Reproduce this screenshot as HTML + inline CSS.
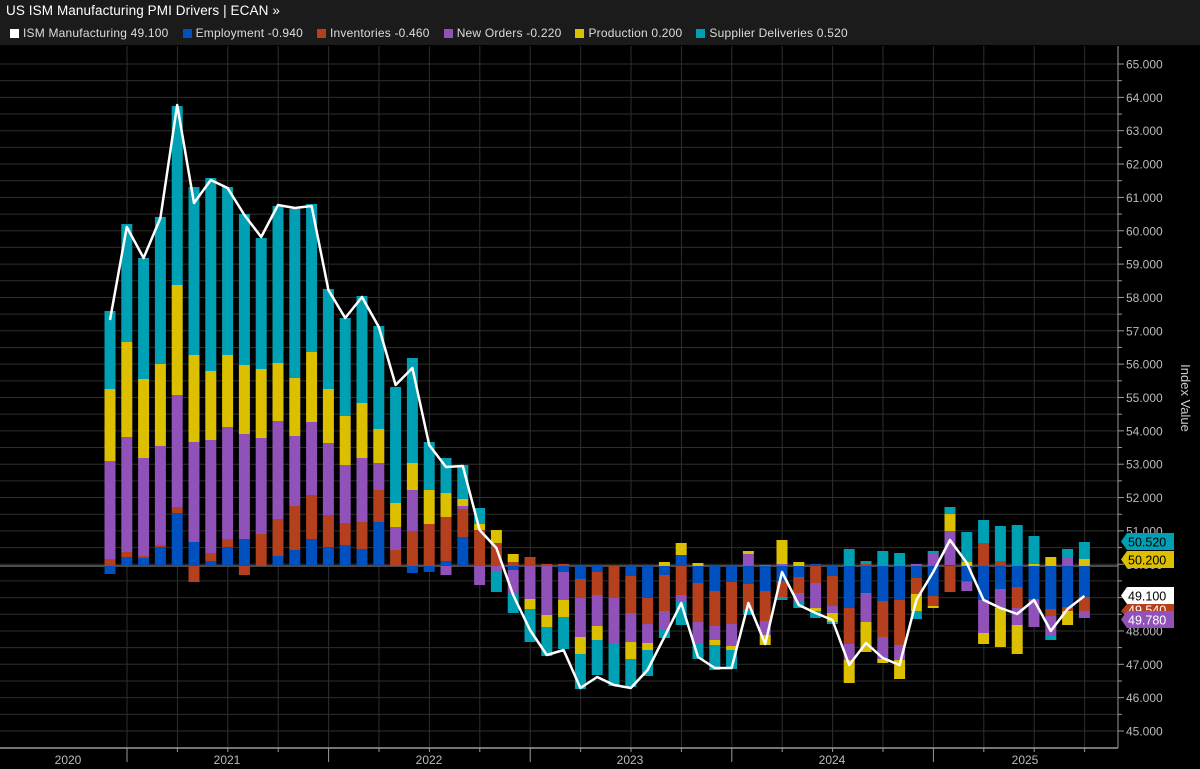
<!DOCTYPE html>
<html><head><meta charset="utf-8"><style>
body{margin:0;background:#000;width:1200px;height:769px;overflow:hidden;font-family:"Liberation Sans",sans-serif}
#hd{position:absolute;left:0;top:0;width:1200px;height:45px;background:#1b1b1b}
#t{position:absolute;left:6px;top:3px;color:#fff;font-size:13.5px;letter-spacing:0.1px}
#lg{position:absolute;left:10px;top:26px;color:#ddd;font-size:12px;white-space:nowrap;letter-spacing:0.2px}
#lg span.s{display:inline-block;width:9px;height:9px;margin:0 4px 0 0;vertical-align:-1px}
#lg b{font-weight:normal;margin-right:14px}
svg{position:absolute;left:0;top:0}
</style></head><body>
<div id="hd"><div id="t">US ISM Manufacturing PMI Drivers | ECAN »</div>
<div id="lg"><span class="s" style="background:#fff"></span><b>ISM Manufacturing 49.100</b><span class="s" style="background:#0050c0"></span><b>Employment -0.940</b><span class="s" style="background:#b5401e"></span><b>Inventories -0.460</b><span class="s" style="background:#9052b8"></span><b>New Orders -0.220</b><span class="s" style="background:#dcc000"></span><b>Production 0.200</b><span class="s" style="background:#00a0b4"></span><b>Supplier Deliveries 0.520</b></div></div>
<svg id="c" width="1200" height="769" style="top:0"></svg>
<script>
var s='',Z=566;
function y(v){return 64+(65-v)*33.35}
for(var k=0;k<=40;k++){var yy=y(45+k*0.5);s+='<line x1="0" x2="1118" y1="'+yy+'" y2="'+yy+'" stroke="#2e2e2e" stroke-width="1"/>'}
for(var i=0;i<20;i++){var x=127+i*50.4;s+='<line x1="'+x+'" x2="'+x+'" y1="46" y2="748" stroke="#2e2e2e"/>'}
s+='<line x1="0" x2="1118" y1="'+Z+'" y2="'+Z+'" stroke="#777" stroke-width="1.3"/>';
var C={E:'#0050c0',I:'#b5401e',N:'#9052b8',P:'#dcc000',S:'#00a0b4'};
var B=[
["I7N98P72S78","E8"],["E9I5N115P95S118",""],["E8I2N98P79S121",""],["E19I2N99P82S147",""],["E53I6N112P110S179",""],
["E24N100P87S168","I16"],["E5I8N113P69S193",""],["E19I8N112P72S168",""],["E27N105P69S151","I9"],["I32N96P69S131",""],
["E10I37N98P58S157",""],["E16I44N70P58S169",""],["E27I44N73P70S148",""],["E19I32N72P54S100",""],["E21I22N58P49S98",""],
["E17I27N64P55S107",""],["E44I32N27P34S103",""],["I16N23P24S116",""],["I35N41P27S105","E7"],["I42P34S48","E6"],
["E5I44P24S35","N9"],["E29I28N3P7S34",""],["I36P6S16","N19"],["I23P13","N5S21"],["I4P8","E4N24S19"],
["I9","N33P10S33"],["I2","N49P12S29"],["I2","E6N28P17S32"],["","E13I19N39P17S35"],["","E6I23N31P14S35"],
["","I32N45S43"],["","E10I37N29P17S28"],["","E32I26N19P7S26"],["P4","E9I36N18S9"],["E11P12","I29N6S24"],
["P3","E17I39N22S15"],["","E25I35N14P5S25"],["","E16I42N22P4S19"],["N12P3","E18I26S5"],["S1","E25I30N14P10"],
["N2P24","E15I16S3"],["P4","E11I16N8S7"],["E2","I17N25P3S7"],["","E10I30N7P9S2"],["S17","E42I36N16P23"],
["I2S3","E27N29P30"],["S15","E35I36N22P4"],["S13","E34I45N15P19"],["N2","E12I16P17S8"],["N13S2","E30I10P2"],
["E1N34P17S7","I26"],["P4S30","E15I1N9"],["I23S23","E34N33P11"],["I5S35","E23N19P39"],["S41","E21I21N17P29"],
["P2S28","E33I1N27"],["P9","E43I7N20S4"],["N9S8","E41I4P14"],["P7S17","E31I14N7"]];
function parse(t){var r=[],m,re=/([EINPS])(\d+)/g;while(m=re.exec(t))r.push([m[1],+m[2]]);return r}
for(var i=0;i<B.length;i++){var cx=110+i*16.8,x0=cx-5.5,yy=Z;
parse(B[i][0]).forEach(function(p){yy-=p[1];s+='<rect x="'+x0+'" y="'+yy+'" width="11" height="'+p[1]+'" fill="'+C[p[0]]+'"/>'});
yy=Z;parse(B[i][1]).forEach(function(p){s+='<rect x="'+x0+'" y="'+yy+'" width="11" height="'+p[1]+'" fill="'+C[p[0]]+'"/>';yy+=p[1]});}
var L=[320,227,258,218,105,203,180,188,215,237,205,208,206,290,318,297,327,385,368,445,467,466,530,548,595,630,655,650,688,677,685,688,670,637,603,657,668,668,603,644,572,605,613,620,665,643,658,665,600,572,540,563,600,608,614,600,631,609,596];
var pts=L.map(function(v,i){return (110+i*16.8).toFixed(1)+','+v}).join(' ');
s+='<polyline points="'+pts+'" fill="none" stroke="#fff" stroke-width="2.5" stroke-linejoin="round"/>';
s+='<line x1="1118" x2="1118" y1="46" y2="748" stroke="#999"/>';
for(var k=0;k<=40;k++){var v=45+k*0.5,yy=y(v);s+='<line x1="1118" x2="'+(k%2?1122:1124)+'" y1="'+yy+'" y2="'+yy+'" stroke="#999"/>';
if(k%2==0)s+='<text x="1126" y="'+(yy+4.5)+'" fill="#bbb" font-size="12">'+v.toFixed(3)+'</text>';}
s+='<line x1="0" x2="1118" y1="748" y2="748" stroke="#999" stroke-width="1.5"/>';
for(var i=0;i<20;i++){var x=127+i*50.4;s+='<line x1="'+x+'" x2="'+x+'" y1="748" y2="'+(i%4==0?762:752)+'" stroke="#999"/>'}
[[68,'2020'],[227,'2021'],[429,'2022'],[630,'2023'],[832,'2024'],[1025,'2025']].forEach(function(a){s+='<text x="'+a[0]+'" y="764" fill="#bbb" font-size="12" text-anchor="middle">'+a[1]+'</text>'});
s+='<text transform="translate(1181,398) rotate(90)" fill="#ccc" font-size="13" text-anchor="middle">Index Value</text>';
function tag(y0,h,bg,fg,t){return '<polygon points="1121,'+(y0+h/2)+' 1127,'+y0+' 1174,'+y0+' 1174,'+(y0+h)+' 1127,'+(y0+h)+'" fill="'+bg+'"/><text x="1128" y="'+(y0+h-3.5)+'" fill="'+fg+'" font-size="12.5">'+t+'</text>'}
s+=tag(533,17,'#00a0b4','#000','50.520')+tag(551,17,'#dcc000','#000','50.200')+tag(604,14,'#b5401e','#fff','49.540')+tag(587,17,'#fff','#000','49.100')+tag(611,17,'#9052b8','#fff','49.780');
document.getElementById('c').innerHTML=s;
</script>
</body></html>
